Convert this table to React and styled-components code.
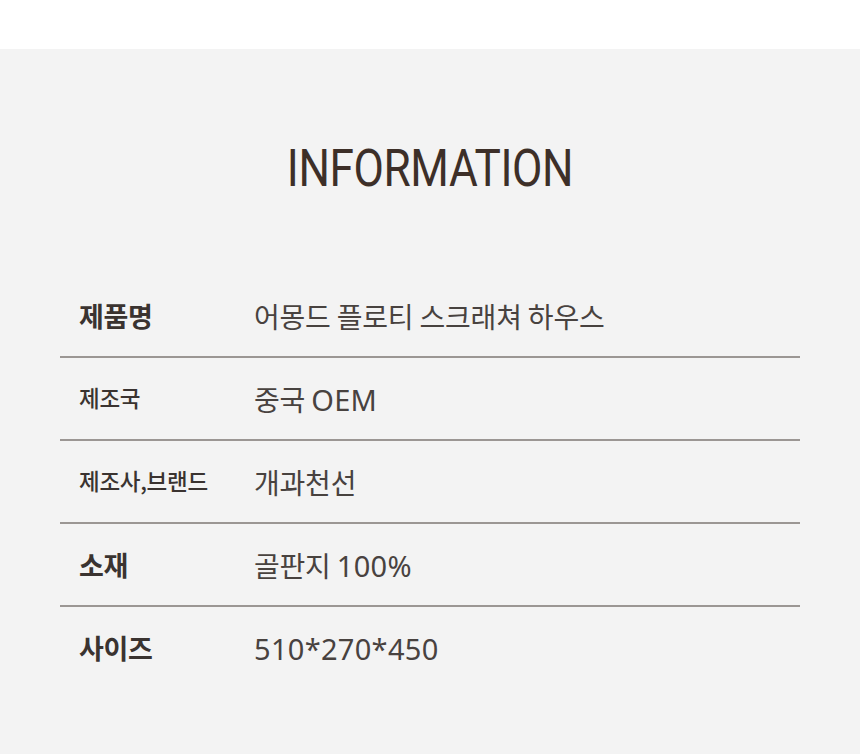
import React from "react";
import styled, { createGlobalStyle } from "styled-components";

const Global = createGlobalStyle`
  html, body { margin: 0; padding: 0; background: #ffffff; }
  body { font-family: "Noto Sans CJK KR", "Noto Sans", sans-serif; }
`;

const TopBand = styled.div`
  height: 49px;
  background: #ffffff;
`;

const Section = styled.section`
  background: #f3f3f3;
  padding: 90px 60px 64px;
  min-height: 705px;
  box-sizing: border-box;
`;

const Title = styled.h2`
  margin: 0;
  height: 60px;
  line-height: 60px;
  text-align: center;
  font-family: Roboto, "Liberation Sans", sans-serif;
  font-weight: 400;
  font-size: 52px;
  letter-spacing: -0.5px;
  color: #3d2f28;
  transform: scaleX(0.85);
`;

const Table = styled.div`
  margin-top: 76px;
  display: flex;
  flex-direction: column;
`;

const Row = styled.div`
  display: grid;
  grid-template-columns: 174px 1fr;
  align-items: center;
  height: 81px;
  padding-left: 19px;
  border-bottom: ${(p) => (p.$last ? "none" : "2px solid #9b9693")};
`;

const Label = styled.div`
  font-family: "Noto Sans CJK KR", sans-serif;
  font-size: ${(p) => (p.$strong ? "27px" : "22.5px")};
  font-weight: ${(p) => (p.$strong ? 700 : 500)};
  color: #3a3330;
  letter-spacing: -0.3px;
  white-space: nowrap;
  margin-top: ${(p) => (p.$strong ? "0" : "-4px")};
`;

const Value = styled.div`
  font-family: "Noto Sans CJK KR", sans-serif;
  font-size: 28px;
  font-weight: 400;
  color: #48423f;
  letter-spacing: -0.2px;
  white-space: nowrap;
  padding-left: 1px;
`;

const Latin = styled.span`
  font-family: "Noto Sans", sans-serif;
  font-size: 29px;
  letter-spacing: 0.3px;
`;

const rows = [
  { label: "제품명", strong: true, value: ["어몽드 플로티 스크래쳐 하우스"] },
  { label: "제조국", strong: false, value: ["중국 ", { latin: "OEM" }] },
  { label: "제조사,브랜드", strong: false, value: ["개과천선"] },
  { label: "소재", strong: true, value: ["골판지 ", { latin: "100%" }] },
  { label: "사이즈", strong: true, value: [{ latin: "510*270*450" }] },
];

export default function App() {
  return (
    <>
      <Global />
      <TopBand />
      <Section>
        <Title>INFORMATION</Title>
        <Table>
          {rows.map((r, i) => (
            <Row key={r.label} $last={i === rows.length - 1}>
              <Label $strong={r.strong}>{r.label}</Label>
              <Value>
                {r.value.map((v, j) =>
                  typeof v === "string" ? (
                    <React.Fragment key={j}>{v}</React.Fragment>
                  ) : (
                    <Latin key={j}>{v.latin}</Latin>
                  )
                )}
              </Value>
            </Row>
          ))}
        </Table>
      </Section>
    </>
  );
}
